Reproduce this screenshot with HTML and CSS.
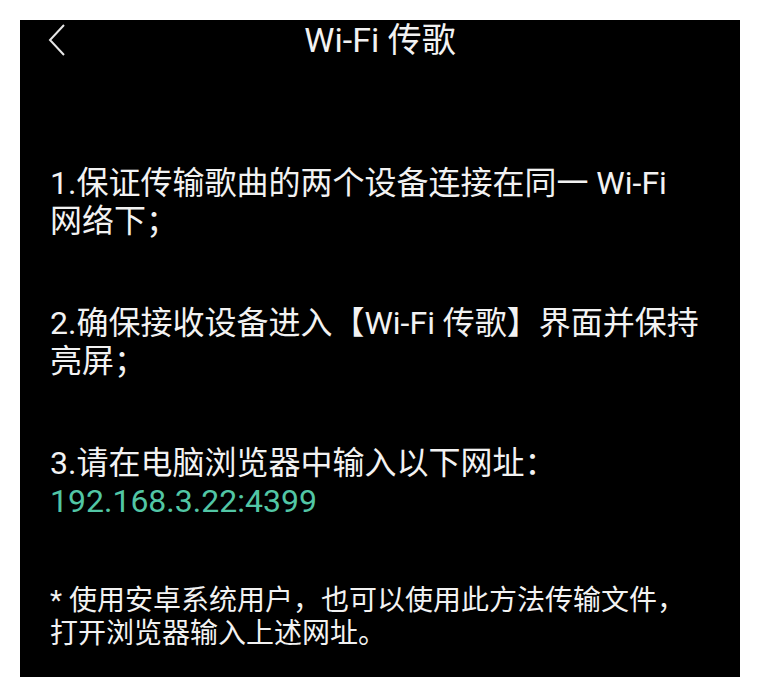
FILE: index.html
```html
<!DOCTYPE html>
<html lang="zh-CN">
<head>
  <meta charset="UTF-8">
  <meta name="viewport" content="width=device-width, initial-scale=1.0">
  <title>Wi-Fi 传歌</title>
  <link rel="stylesheet" href="styles.css">
</head>
<body>
  <div id="screen">
    <div id="header">
      <button id="back-btn" aria-label="返回">
        <svg width="20" height="34" viewBox="0 0 20 34">
          <polyline points="16,2 2,17 16,32" fill="none" stroke="#e6e6e6" stroke-width="2"/>
        </svg>
      </button>
      <h2 id="title">Wi-Fi 传歌</h2>
      <span></span>
    </div>
    <div id="steps">
      <p class="step">1.保证传输歌曲的两个设备连接在同一 Wi-Fi 网络下；</p>
      <p class="step">2.确保接收设备进入【Wi-Fi 传歌】界面并保持亮屏；</p>
      <p class="step">3.请在电脑浏览器中输入以下网址：<br><span class="address">192.168.3.22:4399</span></p>
      <p class="note">* 使用安卓系统用户，也可以使用此方法传输文件，打开浏览器输入上述网址。</p>
    </div>
  </div>
</body>
</html>
```

FILE: styles.css
```css
body {
  margin: 0;
  background-color: #fff;
  font-family: Roboto, "Noto Sans CJK SC", sans-serif;
  color: #f2f2f2;
}
#screen {
  margin: 20px;
  width: 720px;
  height: 657px;
  background-color: #000;
  overflow: hidden;
}
#header {
  display: grid;
  grid-template-columns: 1fr auto 1fr;
  align-items: center;
  height: 40px;
}
#back-btn {
  background: none;
  border: none;
  padding: 0 0 0 28px;
  display: flex;
  align-items: center;
  justify-self: start;
  cursor: pointer;
}
#title {
  margin: 0;
  font-size: 34px;
  font-weight: 400;
  line-height: 40px;
}
#steps {
  padding: 104px 38px 0 30px;
}
.step {
  margin: 0 0 64px;
  font-size: 32px;
  line-height: 38px;
}
.address {
  color: #52c6a5;
}
.note {
  margin: 0;
  font-size: 28px;
  line-height: 33px;
}
```
